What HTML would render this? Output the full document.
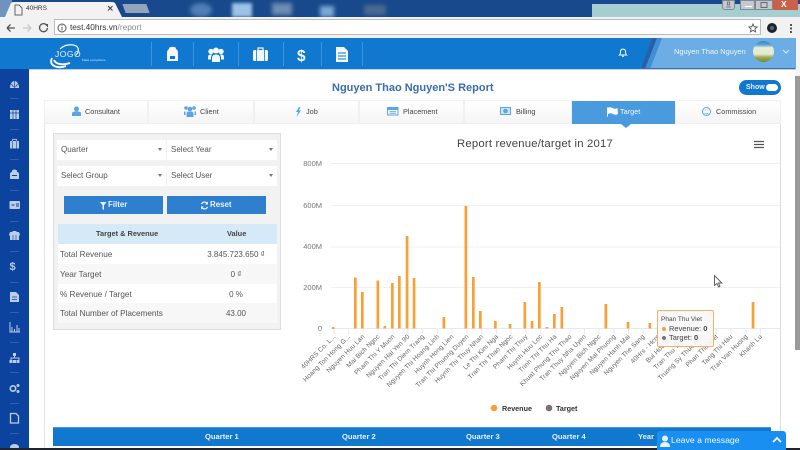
<!DOCTYPE html>
<html><head><meta charset="utf-8"><title>40HRS</title>
<style>
html,body{margin:0;padding:0;width:800px;height:450px;overflow:hidden;background:#fff;font-family:"Liberation Sans",sans-serif;color:#444}
.a{position:absolute}
.t{position:absolute;white-space:nowrap}
.tab{position:absolute;top:100px;height:24px;background:linear-gradient(#fff,#f5f5f5);border:1px solid #f0f0f0;box-sizing:border-box}
.tl{position:absolute;top:100px;font-size:7.300px;line-height:24px;color:#444;white-space:nowrap}
.sel{position:absolute;background:#fff;height:19.500px;font-size:8px;line-height:20px;color:#555;box-sizing:border-box;padding-left:4px}
.sel:after{content:"";position:absolute;right:4px;top:8px;border:2.500px solid transparent;border-top:3px solid #777}
.btn{position:absolute;top:196px;height:18px;width:99px;background:#2e7fce}
.btl{position:absolute;top:196px;color:#e8f2fb;font-size:7.900px;font-weight:bold;line-height:18px}
.row{position:absolute;left:58px;width:219px;height:20px;font-size:8.200px;line-height:21px;color:#555}
.row span{position:absolute;left:2px;white-space:nowrap}
.row b{position:absolute;left:134px;width:88px;text-align:center;font-weight:normal;font-size:8px;white-space:nowrap}
.hd{position:absolute;top:427px;font-size:7.600px;font-weight:bold;color:#e6f2fb}
</style></head>
<body>
<!-- browser chrome -->
<div class="a" style="left:0;top:0;width:800px;height:17px;background:#17498c"></div>
<div class="a" style="left:0;top:0;width:12px;height:17px;background:#6f93bd"></div>
<div class="a" style="left:190px;top:3px;width:22px;height:14px;border-radius:50%;background:#4f7fb4;filter:blur(2px)"></div>
<div class="a" style="left:232px;top:3px;width:20px;height:14px;background:#9cc3e6;filter:blur(1.500px)"></div>
<div class="a" style="left:272px;top:3px;width:20px;height:12px;background:#6f8db0;filter:blur(2px)"></div>
<div class="a" style="left:320px;top:6px;width:14px;height:11px;background:#7ba9d6;filter:blur(2px)"></div>
<div class="a" style="left:364px;top:5px;width:22px;height:10px;background:#4a6a8f;filter:blur(2px)"></div>
<div class="a" style="left:124px;top:4px;width:24px;height:9px;background:#93a5ba;transform:skewX(20deg)"></div>
<div class="a" style="left:592px;top:4px;width:208px;height:13px;background:#a6ced0"></div>
<div class="a" style="left:722px;top:0;width:13px;height:10px;background:#c3c9cc;border:1px solid #7f8a90;box-sizing:border-box;border-radius:0 0 3px 3px"></div>
<div class="a" style="left:740px;top:0;width:15px;height:10px;background:#c3c9cc;border:1px solid #7f8a90;box-sizing:border-box"></div>
<div class="a" style="left:755px;top:0;width:18px;height:10px;background:#c3c9cc;border:1px solid #7f8a90;box-sizing:border-box"></div>
<div class="a" style="left:773px;top:0;width:25px;height:10px;background:#c9604a"></div>
<div class="t" style="left:781px;top:0;font-size:8.500px;line-height:9px;font-weight:bold;color:#fff">X</div>
<svg class="a" style="left:722px;top:0" width="60" height="10"><path d="M4 7h5M5.500 5h2v-3h-2z" stroke="#667" fill="none" stroke-width=".8"/><path d="M23 6.500h7" stroke="#fff" stroke-width="1.200"/><rect x="39" y="2.500" width="6" height="5" fill="none" stroke="#667"/></svg>
<svg class="a" style="left:0;top:0" width="124" height="18"><path d="M5 17 L11 3 Q12 2 14 2 L112 2 Q114 2 115 3 L122 17Z" fill="#f2f2f2"/><path d="M15 5h4l3 3v7h-7z" fill="none" stroke="#666" stroke-width="1"/><path d="M108 6l4.500 4.500M112.500 6l-4.500 4.500" stroke="#444" stroke-width="1.100"/></svg>
<div class="t" style="left:26px;top:4px;font-size:6.500px;line-height:10px;color:#333">40HRS</div>
<div class="a" style="left:0;top:17px;width:800px;height:21px;background:#f2f2f2"></div>
<div class="a" style="left:54px;top:19px;width:707px;height:16px;background:#fff;border:1px solid #bbb;box-sizing:border-box"></div>
<svg class="a" style="left:0;top:17px" width="60" height="21"><path d="M7 11h8M7 11l3.500-3.500M7 11l3.500 3.500" stroke="#555" stroke-width="1.300" fill="none"/><path d="M23 11h8M31 11l-3.500-3.500M31 11l-3.500 3.500" stroke="#c8c8c8" stroke-width="1.300" fill="none"/><path d="M46.500 8a4 4 0 1 0 1 3" stroke="#555" stroke-width="1.300" fill="none"/><path d="M44.500 7h3.500v3.500z" fill="#555"/></svg>
<svg class="a" style="left:56px;top:22px" width="12" height="12"><circle cx="6" cy="6" r="4" fill="none" stroke="#555"/><path d="M6 5v3.500M6 3.200v1" stroke="#555"/></svg>
<div class="t" style="left:70px;top:22px;font-size:8.300px;line-height:11px;color:#333">test.40hrs.vn<span style="color:#888">/report</span></div>
<svg class="a" style="left:748px;top:23px" width="10" height="10"><path d="M5 1l1.200 2.700 2.900.3-2.200 2 .7 2.900L5 7.400 2.400 8.900l.7-2.900-2.200-2 2.900-.3Z" fill="none" stroke="#555" stroke-width=".9"/></svg>
<div class="a" style="left:767px;top:23px;width:10px;height:10px;border-radius:50%;background:#222"></div>
<div class="a" style="left:770px;top:26px;width:4px;height:4px;border-radius:50%;background:#3a6d90"></div>
<div class="a" style="left:790px;top:24px;width:2px;height:2px;background:#555;box-shadow:0 3.500px #555,0 7px #555"></div>
<!-- top nav -->
<div class="a" style="left:0;top:38px;width:796px;height:31px;background:#1178cf"></div>
<div class="a" style="left:796px;top:38px;width:4px;height:38px;background:#f4f4f4"></div>
<svg class="a" style="left:640px;top:38px" width="156" height="32"><path d="M1 31 L12 0 L17 0 L5 31Z" fill="#2a5fa8"/><path d="M5 31 L17 0 L22 0 L10 31Z" fill="#3f8fd8"/><path d="M10 31 L22 0 L156 0 L156 31Z" fill="#6cade6"/><path d="M0 30.500h155" stroke="#3f6fa8" stroke-width="1"/></svg>
<svg class="a" style="left:40px;top:36px" width="80" height="36" fill="none" stroke="#fff"><path d="M12 22 C8 30 18 33 26 30 M14 24 C16 29 24 29 30 27" stroke-width="1.900"/><path d="M20 13 C26 7 36 8 38 12 C39 15 38 17 36 19" stroke-width="1.200"/><text x="15" y="21" font-size="8.500" fill="#eef6fc" stroke="none" letter-spacing=".5" font-family="Liberation Sans">JOGO</text><text x="42" y="25" font-size="3" fill="#cfe4f7" stroke="none" font-family="Liberation Sans">Make everywhere</text></svg>
<div class="a" style="left:151px;top:42px;width:1px;height:24px;background:#3f95dd"></div>
<div class="a" style="left:193px;top:42px;width:1px;height:24px;background:#3f95dd"></div>
<div class="a" style="left:238px;top:42px;width:1px;height:24px;background:#3f95dd"></div>
<div class="a" style="left:283px;top:42px;width:1px;height:24px;background:#3f95dd"></div>
<div class="a" style="left:321px;top:42px;width:1px;height:24px;background:#3f95dd"></div>
<div class="a" style="left:362px;top:42px;width:1px;height:24px;background:#3f95dd"></div>
<svg class="a" style="left:0;top:38px" width="400" height="31" fill="#f2f8fd">
<path d="M167 23 V15 Q167 12 169 11 V11 Q169 9 171 9 Q172.500 8.500 174 9 Q176 9 176 11 Q178 12 178 15 V23Z"/><path d="M170 18h5v3h-5z" fill="#1178cf"/>
<circle cx="211" cy="13.500" r="2.700"/><circle cx="216" cy="12.500" r="3"/><circle cx="221" cy="13.500" r="2.700"/>
<path d="M212 24v-4q0-3.500 4-3.500t4 3.500v4Z"/><path d="M208 21.500v-2.500q0-2.500 2.500-2.500h1.500q-1 1.500-1 3v2ZM224 21.500v-2.500q0-2.500-2.500-2.500h-1.500q1 1.500 1 3v2Z"/>
<rect x="253" y="12" width="15" height="11" rx="1.500"/><path d="M258 12v-2h5v2" fill="none" stroke="#f2f8fd" stroke-width="1.200"/><path d="M256.500 12v11M264.500 12v11" stroke="#1178cf" stroke-width=".8"/>
<text x="297" y="23" font-size="15.500" font-weight="bold" font-family="Liberation Sans">$</text>
<path d="M336 9h8l4 4v11h-12Z"/><path d="M338 15h8M338 18h8M338 21h8" stroke="#1178cf" stroke-width="1"/>
</svg>
<svg class="a" style="left:617px;top:46px" width="12" height="12"><path d="M2.500 9c1-1 1-2 1-4a2.600 2.600 0 0 1 5 0c0 2 0 3 1 4ZM5 10.200h2" fill="none" stroke="#fff" stroke-width="1"/></svg>
<div class="t" style="left:674px;top:46px;font-size:7.400px;line-height:11px;color:#eef6fc">Nguyen Thao Nguyen</div>
<div class="a" style="left:753px;top:41px;width:21px;height:21px;border-radius:50%;background:linear-gradient(#2f86cc 0,#5aa2d8 18%,#e8edd5 32%,#e4ecd0 62%,#a3a84a 78%,#6f8a35 100%)"></div>
<svg class="a" style="left:781px;top:48px" width="10" height="7"><path d="M2 2l3 3 3-3" stroke="#dcecf9" fill="none"/></svg>
<!-- sidebar -->
<div class="a" style="left:0;top:69px;width:29px;height:381px;background:#0b439f"></div>
<div class="a" style="left:29px;top:69px;width:767px;height:1px;background:#c3cfe0"></div>
<svg class="a" style="left:0;top:69px" width="29" height="381" fill="#bccde8">
<g stroke="#2f60ad" stroke-width="1"><path d="M10 29.500h9M10 60.500h9M10 90.500h9M10 121.500h9M10 152.500h9M10 182.500h9M10 213.500h9M10 243.500h9M10 273.500h9M10 303.500h9M10 334.500h9M10 364.500h9"/></g>
<path d="M10 19a4.500 7 0 0 1 9 0Z"/><path d="M14.500 12v7M11.500 15l2 3M17.500 15l-2 3" stroke="#0b439f" stroke-width=".7"/>
<rect x="10" y="41" width="9" height="9"/><path d="M10 44h9M13 41v9M16 41v9" stroke="#0b439f" stroke-width=".7"/>
<rect x="10" y="72" width="9" height="7.500" rx=".7"/><path d="M12.500 72v-1.700h4v1.700" fill="none" stroke="#bccde8" stroke-width=".8"/><path d="M12.500 72v7.500M16.500 72v7.500" stroke="#0b439f" stroke-width=".6"/>
<path d="M10 110v-5q0-2 2-2v-1.500q2.500-2 5 0v1.500q2 0 2 2v5Z"/><path d="M12 106.500h5" stroke="#0b439f"/>
<rect x="9.500" y="132" width="10.500" height="8" rx="1"/><path d="M11.500 136h3M16 135h3M16 137h3" stroke="#0b439f"/>
<path d="M10 171v-4l-1-1 1-3h2l1-1h3l1 1h2l1 3-1 1v4Z"/><path d="M13 166v5M16 166v5" stroke="#0b439f" stroke-width=".6"/>
<text x="9.500" y="201" font-size="11" font-weight="bold" font-family="Liberation Sans">$</text>
<path d="M10 223h6l3 3v7h-9Z"/><path d="M12 228h5M12 230.500h5" stroke="#0b439f" stroke-width=".8"/>
<path d="M10 253v10h10M12 263v-5M14.500 263v-3M17 263v-7M19 263v-4" stroke="#bccde8" stroke-width="1" fill="none"/>
<path d="M13 284h3v3h-3ZM9.500 291h3v3h-3ZM13 291h3v3h-3ZM16.500 291h3v3h-3Z"/><path d="M11 291v-2h8v2M14.500 287v2" stroke="#bccde8" stroke-width="1" fill="none"/>
<circle cx="13" cy="319.500" r="2.700" fill="none" stroke="#bccde8" stroke-width="1.600"/><circle cx="18" cy="316.500" r="1.500"/><circle cx="18" cy="322.500" r="1.500"/>
<path d="M10.500 344.500h5.500l2.500 2.500v7h-8Z" fill="none" stroke="#bccde8" stroke-width="1.300"/>
<ellipse cx="14.500" cy="378" rx="4.500" ry="3"/>
</svg>
<div class="a" style="left:44px;top:124px;width:1px;height:326px;background:#e6e6e6"></div>
<div class="a" style="left:780px;top:124px;width:1px;height:326px;background:#dcdcdc"></div>
<div class="a" style="left:795px;top:76px;width:5px;height:274px;background:#9a9a9a"></div>
<!-- title -->
<div class="t" style="left:332px;top:81px;font-size:11px;line-height:15px;font-weight:bold;color:#3a6cb0">Nguyen Thao Nguyen'S Report</div>
<div class="a" style="left:739px;top:80px;width:42px;height:15px;background:#1178cf;border-radius:8px"></div>
<div class="t" style="left:746px;top:83px;font-size:7px;line-height:10px;font-weight:bold;color:#e8f2fb">Show</div>
<div class="a" style="left:766px;top:84px;width:12px;height:7px;background:#fff;border-radius:4px"></div>
<!-- tabs -->
<div class="tab" style="left:44px;width:104px"></div>
<div class="tab" style="left:148px;width:106px"></div>
<div class="tab" style="left:254px;width:105px"></div>
<div class="tab" style="left:359px;width:105px"></div>
<div class="tab" style="left:464px;width:108px"></div>
<div class="tab" style="left:572px;width:103px;background:#4a9ade;border:0;top:101px;height:23px"></div>
<div class="tab" style="left:675px;width:106px"></div>
<div class="tl" style="left:85px">Consultant</div>
<div class="tl" style="left:200px">Client</div>
<div class="tl" style="left:306px">Job</div>
<div class="tl" style="left:403px">Placement</div>
<div class="tl" style="left:516px">Billing</div>
<div class="tl" style="left:620px;color:#f2f8fd">Target</div>
<div class="tl" style="left:716px">Commission</div>
<div class="a" style="left:621px;top:124px;border:5px solid transparent;border-top:4px solid #4a9ade"></div>
<svg class="a" style="left:0;top:100px" width="720" height="24" fill="#5aa5e4">
<path d="M72 16v-2.500q0-2 3-2h3q3 0 3 2v2.500Z"/><circle cx="76.500" cy="9" r="2.500"/>
<path d="M186.500 17v-3q0-2.500 2.500-2.500h2q2.500 0 2.500 2.500v3Z"/><circle cx="190" cy="9" r="2.300"/><circle cx="186" cy="8" r="1.800"/><circle cx="194" cy="8" r="1.800"/><path d="M185.500 15v-3.500h-1.500v3.500ZM194.500 15v-3.500h1.500v3.500Z"/>
<path d="M299 7l-3 5h2l-1.500 5 4.500-6.500h-2l1.500-3.500Z"/>
<rect x="387.500" y="7.500" width="10.500" height="7.500" fill="none" stroke="#5aa5e4" stroke-width="1"/><path d="M387.500 9h10.500" stroke="#5aa5e4" stroke-width="2"/><path d="M389.500 11.500h6.500M389.500 13.200h6.500" stroke="#5aa5e4" stroke-width=".8"/>
<rect x="500.500" y="7.500" width="10" height="7" fill="#cfe5f7" stroke="#5aa5e4"/><circle cx="505.500" cy="11" r="2.300"/>
<path d="M607.500 8q2.500-1.500 5 0t5 0l.5 6q-2.500 1.500-5 0t-5 0v2.500h-1V7h.5Z" fill="#fff"/>
<circle cx="706.500" cy="11.500" r="4" fill="none" stroke="#5aa5e4"/><path d="M704.500 13q2 1.800 4 0M704.800 10h1M707.500 10h1" stroke="#5aa5e4" stroke-width=".7" fill="none"/>
</svg>
<!-- filter panel -->
<div class="a" style="left:53px;top:133px;width:228px;height:197px;background:#f2f2f2;border:1px solid #dcdcdc;box-sizing:border-box"></div>
<div class="sel" style="left:57px;top:140px;width:109px">Quarter</div>
<div class="sel" style="left:167px;top:140px;width:110px">Select Year</div>
<div class="sel" style="left:57px;top:166px;width:109px">Select Group</div>
<div class="sel" style="left:167px;top:166px;width:110px">Select User</div>
<div class="btn" style="left:64px"></div>
<div class="btn" style="left:167px"></div>
<svg class="a" style="left:64px;top:196px" width="202" height="18" fill="#e8f2fb"><path d="M36 6h6.500l-2.500 3.200v4.800l-1.500-1v-3.800Z"/><path d="M137.500 8a3.400 3.400 0 0 1 5.800-.5M143.500 11a3.400 3.400 0 0 1-5.800.5" fill="none" stroke="#e8f2fb" stroke-width="1.300"/><path d="M144 5.500v3h-3ZM137 13.500v-3h3Z"/></svg>
<div class="btl" style="left:108px">Filter</div>
<div class="btl" style="left:210px">Reset</div>
<div class="a" style="left:58px;top:224px;width:219px;height:20px;background:#d6e9f6"></div>
<div class="t" style="left:96px;top:224px;font-size:7.400px;line-height:20px;font-weight:bold;color:#444">Target &amp; Revenue</div>
<div class="t" style="left:227px;top:224px;font-size:7.400px;line-height:20px;font-weight:bold;color:#444">Value</div>
<div class="row" style="top:244px;background:#fff"><span>Total Revenue</span><b>3.845.723.650 ₫</b></div>
<div class="row" style="top:264px;background:#f7f7f7"><span>Year Target</span><b>0 ₫</b></div>
<div class="row" style="top:284px;background:#fff;height:19px"><span>% Revenue / Target</span><b>0 %</b></div>
<div class="row" style="top:303px;background:#f7f7f7"><span>Total Number of Placements</span><b>43.00</b></div>
<!-- chart -->
<svg class="a" style="left:290px;top:130px" width="490" height="295" font-family="Liberation Sans">
<text x="245" y="17" text-anchor="middle" font-size="11.300" letter-spacing=".2" fill="#444">Report revenue/target in 2017</text>
<path d="M464 11.500h10M464 14.500h10M464 17.500h10" stroke="#555" stroke-width="1.300"/>
<g stroke="#eef0f3" stroke-width="1"><path d="M41 33.500h474M41 75.500h474M41 117h474M41 157.500h474"/></g>
<path d="M41 198.500h474" stroke="#e4e9f2" stroke-width="1"/>
<g font-size="7.500" fill="#777" text-anchor="end"><text x="32" y="36">800M</text><text x="32" y="78">600M</text><text x="32" y="119">400M</text><text x="32" y="160">200M</text><text x="32" y="201">0</text></g>
<g stroke="#e4e9f2"><path d="M44 199v5M58.700 199v5M73 199v5M88 199v5M103 199v5M118 199v5M132.700 199v5M147.700 199v5M162 199v5M177 199v5M191.700 199v5M206.700 199v5M221 199v5M236 199v5M250.700 199v5M265 199v5M280 199v5M294.500 199v5M309 199v5M324 199v5M338.500 199v5M353 199v5M368 199v5M382.500 199v5M397 199v5M412 199v5M426.500 199v5M441 199v5M456 199v5M470.500 199v5"/></g>
<g fill="#f9a037">
<rect x="42" y="197" width="2.500" height="2"/><rect x="64" y="147.500" width="2.700" height="51"/><rect x="71" y="162" width="2.700" height="36.500"/><rect x="86.500" y="150.500" width="2.700" height="48"/><rect x="93.500" y="196" width="2.700" height="2.500"/><rect x="101" y="153" width="2.700" height="45.500"/><rect x="108" y="146" width="2.700" height="52.500"/><rect x="115.700" y="106" width="2.700" height="92.500"/><rect x="122.700" y="148" width="2.700" height="50.500"/><rect x="152.500" y="187" width="2.700" height="11.500"/><rect x="174.500" y="76" width="2.700" height="122.500"/><rect x="182" y="147" width="2.700" height="51.500"/><rect x="189" y="181" width="2.700" height="17.500"/><rect x="204" y="191" width="2.700" height="7.500"/><rect x="218.700" y="194" width="2.700" height="4.500"/><rect x="233.500" y="172" width="2.700" height="26.500"/><rect x="240.700" y="191" width="2.700" height="7.500"/><rect x="248" y="152" width="2.700" height="46.500"/><rect x="255.500" y="197" width="2.700" height="1.500"/><rect x="263" y="184" width="2.700" height="14.500"/><rect x="270.500" y="177" width="2.700" height="21.500"/><rect x="314.500" y="174" width="2.700" height="24.500"/><rect x="336.700" y="192" width="2.700" height="6.500"/><rect x="358.500" y="193" width="2.700" height="5.500"/><rect x="461.700" y="172" width="2.700" height="26.500"/>
</g>
<g font-size="6.600" fill="#666" text-anchor="end" letter-spacing=".1">
<text transform="translate(46,207) rotate(-45)">40HRS Co. L...</text>
<text transform="translate(60.700,207) rotate(-45)">Hoang Ton Hong G...</text>
<text transform="translate(75,207) rotate(-45)">Nguyen Huu Lan</text>
<text transform="translate(90,207) rotate(-45)">Mai Bich Ngoc</text>
<text transform="translate(105,207) rotate(-45)">Pham Thi Y Muon</text>
<text transform="translate(120,207) rotate(-45)">Nguyen Hai Yen 90</text>
<text transform="translate(134.700,207) rotate(-45)">Tran Thi Diem Trang</text>
<text transform="translate(149.700,207) rotate(-45)">Nguyen Thi Hoang Linh</text>
<text transform="translate(164,207) rotate(-45)">Huynh Hong Lien</text>
<text transform="translate(179,207) rotate(-45)">Tran Thi Phuong Duyen</text>
<text transform="translate(193.700,207) rotate(-45)">Huynh Thi Thuy Nhan</text>
<text transform="translate(208.700,207) rotate(-45)">Le Thi Kim Nga</text>
<text transform="translate(223,207) rotate(-45)">Tran Thi Thao Ngoc</text>
<text transform="translate(238,207) rotate(-45)">Pham Thi Thuy</text>
<text transform="translate(252.700,207) rotate(-45)">Huynh Huu Loc</text>
<text transform="translate(267,207) rotate(-45)">Trinh Thi Thu Ha</text>
<text transform="translate(282,207) rotate(-45)">Khuat Phung Thu Thao</text>
<text transform="translate(296.500,207) rotate(-45)">Tran Thuy Nha Uyen</text>
<text transform="translate(311,207) rotate(-45)">Nguyen Bich Ngoc</text>
<text transform="translate(326,207) rotate(-45)">Nguyen Mai Phuong</text>
<text transform="translate(340.500,207) rotate(-45)">Nguyen Hanh Mai</text>
<text transform="translate(355,207) rotate(-45)">Nguyen The Sang</text>
<text transform="translate(370,207) rotate(-45)">40Hrs - Hcm</text>
<text transform="translate(384.500,207) rotate(-45)">Bui Hoa Mai</text>
<text transform="translate(399,207) rotate(-45)">Tran Thu Trang</text>
<text transform="translate(414,207) rotate(-45)">Truong Sy Thuc Anh</text>
<text transform="translate(428.500,207) rotate(-45)">Phan Thu Viet</text>
<text transform="translate(443,207) rotate(-45)">Tang Thi Hau</text>
<text transform="translate(458,207) rotate(-45)">Tran Van Huong</text>
<text transform="translate(472.500,207) rotate(-45)">Khanh Lu</text>
</g>
<circle cx="204" cy="278" r="3.300" fill="#f9a037"/>
<text x="212" y="281" font-size="7.200" font-weight="bold" fill="#333">Revenue</text>
<circle cx="259" cy="278" r="3.300" fill="#7f6f78"/>
<text x="266" y="281" font-size="7.200" font-weight="bold" fill="#333">Target</text>
</svg>
<!-- tooltip -->
<div class="a" style="left:657px;top:310px;width:57px;height:37px;background:rgba(247,247,247,.9);border:1px solid #f6b060;border-radius:2px;box-sizing:border-box"></div>
<div class="t" style="left:661px;top:316px;font-size:6.500px;line-height:8px;color:#444">Phan Thu Viet</div>
<div class="a" style="left:662px;top:327px;width:4px;height:4px;border-radius:50%;background:#f9a037"></div>
<div class="t" style="left:669px;top:324px;font-size:7.500px;line-height:9px;color:#444">Revenue: <b>0</b></div>
<div class="a" style="left:662px;top:336px;width:4px;height:4px;border-radius:50%;background:#7f6f78"></div>
<div class="t" style="left:669px;top:333px;font-size:7.500px;line-height:9px;color:#444">Target: <b>0</b></div>
<svg class="a" style="left:713px;top:274px" width="10" height="15"><path d="M1.500 1.500v10l2.500-2 1.500 3.500 1.500-.7-1.500-3.300h3.300Z" fill="#fff" stroke="#555" stroke-width=".9"/></svg>
<!-- table header -->
<div class="a" style="left:53px;top:427px;width:718px;height:19px;background:#1178cf;border-top:1px solid #4a9ade;box-sizing:border-box"></div>
<div class="hd" style="left:205px;line-height:20px">Quarter 1</div>
<div class="hd" style="left:342px;line-height:20px">Quarter 2</div>
<div class="hd" style="left:466px;line-height:20px">Quarter 3</div>
<div class="hd" style="left:552px;line-height:20px">Quarter 4</div>
<div class="hd" style="left:638px;line-height:20px">Year</div>
<!-- chat -->
<div class="a" style="left:657px;top:431px;width:129px;height:19px;background:#1a8ff2;border-radius:3px 3px 0 0"></div>
<svg class="a" style="left:658px;top:434px" width="14" height="14"><circle cx="7" cy="4.500" r="3" fill="#e8f3fd"/><path d="M2 13q0-5 5-5t5 5Z" fill="#e8f3fd"/></svg>
<div class="t" style="left:671px;top:434px;font-size:8.700px;line-height:13px;color:#f0f8fe">Leave a message</div>
<svg class="a" style="left:770px;top:435px" width="14" height="10"><path d="M3 7l4-4 4 4" stroke="#fff" stroke-width="1.800" fill="none"/></svg>
<div class="a" style="left:0;top:448px;width:657px;height:2px;background:#20242c"></div>
<div class="a" style="left:786px;top:448px;width:14px;height:2px;background:#20242c"></div>
</body></html>
